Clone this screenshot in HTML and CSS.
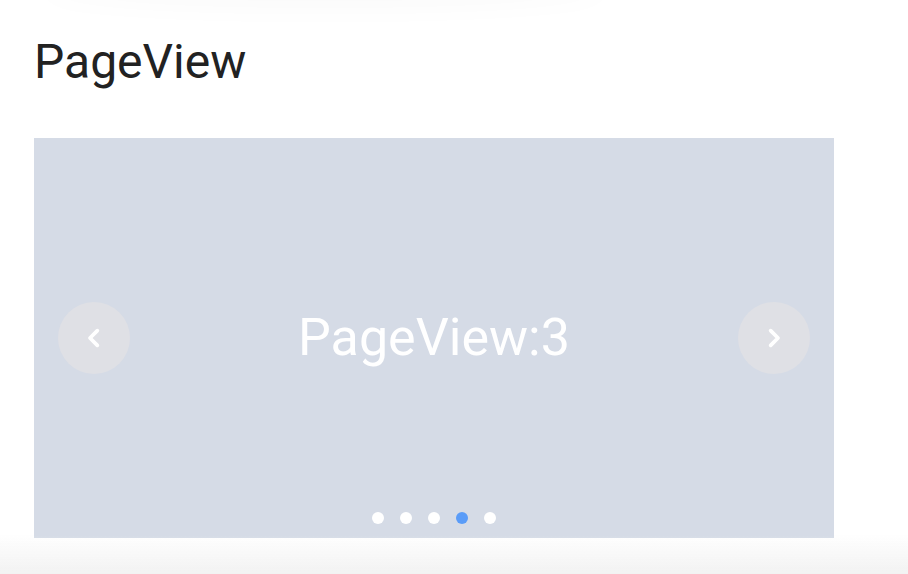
FILE: index.html
```html
<!DOCTYPE html>
<html>
<head>
<meta charset="utf-8">
<link rel="stylesheet" href="styles.css">
</head>
<body>
<div class="top-shadow"></div>
<main class="page">
  <h1 class="title">PageView</h1>
  <section class="carousel">
    <button class="nav nav-prev" aria-label="previous">
      <svg viewBox="0 0 24 24" width="32" height="32"><polyline points="14.5,6.5 9,12 14.5,17.5" fill="none" stroke="#fff" stroke-width="2.8" stroke-linecap="round" stroke-linejoin="round"/></svg>
    </button>
    <div class="slide">PageView:3</div>
    <button class="nav nav-next" aria-label="next">
      <svg viewBox="0 0 24 24" width="32" height="32"><polyline points="9.5,6.5 15,12 9.5,17.5" fill="none" stroke="#fff" stroke-width="2.8" stroke-linecap="round" stroke-linejoin="round"/></svg>
    </button>
    <div class="dots">
      <span class="dot"></span>
      <span class="dot"></span>
      <span class="dot"></span>
      <span class="dot active"></span>
      <span class="dot"></span>
    </div>
  </section>
</main>
<div class="bottom-fade"></div>
</body>
</html>
```
FILE: styles.css
```css
html, body {
  margin: 0;
  padding: 0;
  background: #fff;
  font-family: Roboto, "Liberation Sans", sans-serif;
  overflow: hidden;
}
.page {
  padding: 34px 34px 0;
}
.title {
  margin: 0 0 48px;
  font-size: 48px;
  font-weight: 400;
  line-height: 56px;
  color: #222;
}
.carousel {
  position: relative;
  width: 800px;
  height: 400px;
  background: #d5dbe6;
  display: flex;
  align-items: center;
  justify-content: space-between;
  padding: 0 24px;
  box-sizing: border-box;
}
.slide {
  color: #fff;
  font-size: 52px;
  line-height: 60px;
}
.nav {
  width: 72px;
  height: 72px;
  border-radius: 50%;
  border: 0;
  padding: 0;
  background: #dfe0e5;
  display: flex;
  align-items: center;
  justify-content: center;
}
.dots {
  position: absolute;
  left: 0;
  right: 0;
  bottom: 14px;
  display: flex;
  justify-content: center;
  gap: 16px;
}
.dot {
  width: 12px;
  height: 12px;
  border-radius: 50%;
  background: #fff;
}
.dot.active {
  background: #5a9cf8;
}
.top-shadow {
  position: absolute;
  left: 40px;
  top: -40px;
  width: 570px;
  height: 40px;
  border-radius: 50%;
  box-shadow: 0 8px 30px rgba(0,0,0,0.025);
}
.bottom-fade {
  position: fixed;
  left: 0;
  right: 0;
  bottom: 0;
  height: 40px;
  background: linear-gradient(to bottom, rgba(243,243,243,0), #f2f2f2);
  pointer-events: none;
}
```
